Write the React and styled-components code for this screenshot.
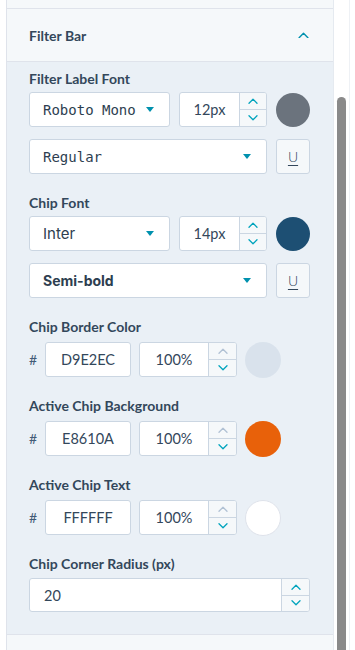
import styled, { createGlobalStyle } from 'styled-components'

const GlobalStyle = createGlobalStyle`
  body {
    margin: 0;
    background: #ffffff;
    font-family: Lato, "Open Sans", sans-serif;
    color: #33475b;
  }
`

const Page = styled.div`
  display: flex;
  height: 650px;
  overflow: hidden;
  padding-left: 6px;
`

const Panel = styled.div`
  width: 326px;
  border-left: 1px solid #dfe3eb;
  border-right: 1px solid #e5eaf0;
  display: flex;
  flex-direction: column;
`

const PrevSection = styled.div`
  height: 8px;
  background: #f5f8fa;
  border-bottom: 1px solid #dfe3eb;
`

const Header = styled.div`
  height: 52px;
  background: #f5f8fa;
  border-bottom: 1px solid #dfe3eb;
  display: flex;
  align-items: center;
  justify-content: space-between;
  padding: 0 24px 0 22px;
  font-size: 14px;
  font-weight: 700;
`

const Body = styled.div`
  background: #eaf0f6;
  padding: 9px 23px 22px 22px;
  display: flex;
  flex-direction: column;
  gap: 21px;
  border-bottom: 1px solid #dfe3eb;
`

const NextSection = styled.div`
  flex: 1;
  background: #f5f8fa;
`

const Field = styled.div`
  display: flex;
  flex-direction: column;
`

const Label = styled.div`
  font-size: 14px;
  font-weight: 700;
  line-height: 16px;
  margin-bottom: ${p => p.$gap || 5}px;
`

const Rows = styled.div`
  display: flex;
  flex-direction: column;
  gap: 12px;
`

const Row = styled.div`
  display: flex;
  align-items: center;
  gap: ${p => p.$gap || 9}px;
`

const Select = styled.div`
  box-sizing: border-box;
  width: ${p => p.$w}px;
  height: 35px;
  background: #fff;
  border: 1px solid #cbd6e2;
  border-radius: 3px;
  display: flex;
  align-items: center;
  justify-content: space-between;
  padding: 0 15px 0 13px;
  font-family: ${p => (p.$mono ? '"DejaVu Sans Mono", monospace' : 'Inter, Lato, sans-serif')};
  font-size: ${p => p.$size || 14}px;
  font-weight: ${p => p.$weight || 400};
  color: #2d3e50;
`

const Caret = styled.span`
  width: 0;
  height: 0;
  border-left: 4.5px solid transparent;
  border-right: 4.5px solid transparent;
  border-top: 5px solid #0091ae;
`

const NumberBox = styled.div`
  box-sizing: border-box;
  width: ${p => p.$w}px;
  height: ${p => p.$h || 35}px;
  background: #fff;
  border: 1px solid #cbd6e2;
  border-radius: 3px;
  display: flex;
  overflow: hidden;
`

const NumberValue = styled.div`
  flex: 1;
  display: flex;
  align-items: center;
  justify-content: ${p => (p.$left ? 'flex-start' : 'center')};
  padding-left: ${p => (p.$left ? 14 : 0)}px;
  font-size: 14.5px;
  color: #33475b;
`

const Stepper = styled.div`
  width: ${p => p.$w || 26}px;
  border-left: 1px solid #cbd6e2;
  background: #f5f8fa;
  display: flex;
  flex-direction: column;
`

const StepHalf = styled.div`
  flex: 1;
  display: flex;
  align-items: center;
  justify-content: center;
  & + & {
    border-top: 1px solid #cbd6e2;
  }
`

const Swatch = styled.div`
  width: ${p => p.$size || 34}px;
  height: ${p => p.$size || 34}px;
  margin: ${p => (p.$size > 35 ? '-0.5px 0' : '0')};
  border-radius: 50%;
  background: ${p => p.$color};
  box-sizing: border-box;
  border: ${p => (p.$outline ? '1px solid #dfe3eb' : 'none')};
  flex-shrink: 0;
`

const UnderlineButton = styled.div`
  box-sizing: border-box;
  width: 34px;
  height: 35px;
  background: #f5f8fa;
  border: 1px solid #cbd6e2;
  border-radius: 3px;
  display: flex;
  align-items: center;
  justify-content: center;
  font-size: 14px;
  font-weight: 300;
  color: #33475b;
  text-decoration: underline;
  text-underline-offset: 3px;
`

const Hash = styled.span`
  width: 8px;
  font-size: 14px;
  color: #425b76;
`

const HexBox = styled.div`
  box-sizing: border-box;
  width: 86px;
  height: 35px;
  background: #fff;
  border: 1px solid #cbd6e2;
  border-radius: 3px;
  display: flex;
  align-items: center;
  justify-content: center;
  font-size: 14.5px;
  color: #33475b;
`

const ScrollTrack = styled.div`
  width: 15px;
  border-right: 1px solid #eef1f5;
  display: flex;
  justify-content: center;
  padding-top: 97px;
`

const Thumb = styled.div`
  width: 9px;
  background: #8a8a8a;
  border-radius: 5px 5px 0 0;
`

const Chevron = ({ up, color = '#0091ae', w = 10 }) => (
  <svg width={w} height={w * 0.6} viewBox="0 0 10 6" fill="none">
    <path
      d={up ? 'M1 5.2 L5 1.2 L9 5.2' : 'M1 0.8 L5 4.8 L9 0.8'}
      stroke={color}
      strokeWidth="1.3"
      strokeLinecap="round"
      strokeLinejoin="round"
    />
  </svg>
)

const NumberInput = ({ value, width, height, stepWidth, left, upDisabled }) => (
  <NumberBox $w={width} $h={height}>
    <NumberValue $left={left}>{value}</NumberValue>
    <Stepper $w={stepWidth}>
      <StepHalf><Chevron up color={upDisabled ? '#b0c1d4' : '#00a4bd'} /></StepHalf>
      <StepHalf><Chevron color="#00a4bd" /></StepHalf>
    </Stepper>
  </NumberBox>
)

const FontField = ({ label, family, mono, familySize, size, color, weight, weightLabel }) => (
  <Field>
    <Label>{label}</Label>
    <Rows>
      <Row>
        <Select $w={144} $mono={mono} $size={familySize}>
          {family}
          <Caret />
        </Select>
        <Row $gap={9}>
          <NumberInput value={size} width={88} stepWidth={26} />
          <Swatch $color={color} />
        </Row>
      </Row>
      <Row>
        <Select $w={238} $mono={mono} $weight={weight}>
          {weightLabel}
          <Caret />
        </Select>
        <UnderlineButton>U</UnderlineButton>
      </Row>
    </Rows>
  </Field>
)

const ColorField = ({ label, hex, color, outline }) => (
  <Field>
    <Label $gap={7}>{label}</Label>
    <Row $gap={8}>
      <Hash>#</Hash>
      <HexBox>{hex}</HexBox>
      <NumberInput value="100%" width={98} height={35} stepWidth={27} upDisabled />
      <Swatch $color={color} $size={36} $outline={outline} />
    </Row>
  </Field>
)

export default function App() {
  return (
    <>
      <GlobalStyle />
      <Page>
        <Panel>
          <PrevSection />
          <Header>
            Filter Bar
            <Chevron up w={11} />
          </Header>
          <Body>
            <FontField
              label="Filter Label Font"
              family="Roboto Mono"
              mono
              size="12px"
              color="#6b737d"
              weightLabel="Regular"
            />
            <FontField
              label="Chip Font"
              family="Inter"
              familySize={15}
              size="14px"
              color="#1d4f73"
              weight={700}
              weightLabel="Semi-bold"
            />
            <ColorField label="Chip Border Color" hex="D9E2EC" color="#d9e2ec" />
            <ColorField label="Active Chip Background" hex="E8610A" color="#e8610a" />
            <ColorField label="Active Chip Text" hex="FFFFFF" color="#ffffff" outline />
            <Field>
              <Label $gap={6}>Chip Corner Radius (px)</Label>
              <NumberInput value="20" width={281} height={34} stepWidth={27} left />
            </Field>
          </Body>
          <NextSection />
        </Panel>
        <ScrollTrack>
          <Thumb />
        </ScrollTrack>
      </Page>
    </>
  )
}
